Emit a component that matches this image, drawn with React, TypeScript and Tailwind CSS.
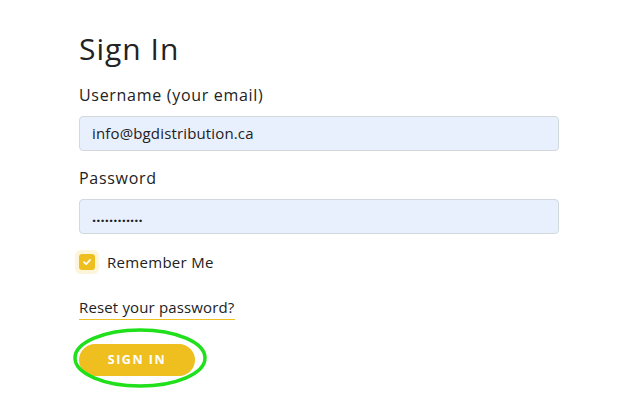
import React from "react";

export default function App() {
  return (
    <div className="w-[621px] h-[408px] bg-white overflow-hidden" style={{ fontFamily: '"Open Sans", sans-serif' }}>
      <div className="pl-[79px] pt-[30px] w-[559px] flex flex-col text-[#222]">
        <h1 className="text-[30px] leading-[38px] font-normal tracking-[1px]">Sign In</h1>
        <label className="mt-[16px] text-[16px] leading-[22px] tracking-[0.7px]">Username (your email)</label>
        <div className="mt-[10px] h-[35px] bg-[#e8f0fe] border border-[#d3d8de] rounded-[4px] flex items-center pl-[12px] text-[15px] tracking-[0.15px]">
          info@bgdistribution.ca
        </div>
        <label className="mt-[16px] text-[16px] leading-[22px] tracking-[0.7px]">Password</label>
        <div className="mt-[10px] h-[35px] bg-[#e8f0fe] border border-[#d3d8de] rounded-[4px] flex items-center pl-[12px] text-[14.5px] font-bold tracking-[0.1px]">
          ............
        </div>
        <div className="mt-[16px] flex items-center gap-[8px]">
          <div className="w-[24px] h-[24px] -ml-[4px] rounded-[6px] bg-[#fdf5d9] flex items-center justify-center">
            <div className="w-[16px] h-[16px] rounded-[3px] bg-[#efbf1f] flex items-center justify-center">
              <svg width="10" height="10" viewBox="0 0 10 10">
                <path d="M2 5.2 L4.2 7.2 L8 3" stroke="white" strokeWidth="1.8" fill="none" strokeLinecap="round" strokeLinejoin="round" />
              </svg>
            </div>
          </div>
          <span className="text-[15px] tracking-[0.3px]">Remember Me</span>
        </div>
        <div className="mt-[21px]">
          <span className="inline-block text-[15px] leading-[20px] border-b border-[#efbf1f] pb-[2px] text-[#222] tracking-[0.15px]">Reset your password?</span>
        </div>
        <div className="mt-[24px] relative w-[116px]">
          <button className="w-[116px] h-[32px] rounded-full bg-[#efbf1f] text-white text-[12.5px] font-bold tracking-[1.5px]">SIGN IN</button>
          <svg className="absolute left-[-7px] top-[-16px]" width="136" height="62" viewBox="0 0 136 62">
            <ellipse cx="68" cy="30" rx="65" ry="28" fill="none" stroke="#1fe01a" strokeWidth="3.5" />
          </svg>
        </div>
      </div>
    </div>
  );
}
